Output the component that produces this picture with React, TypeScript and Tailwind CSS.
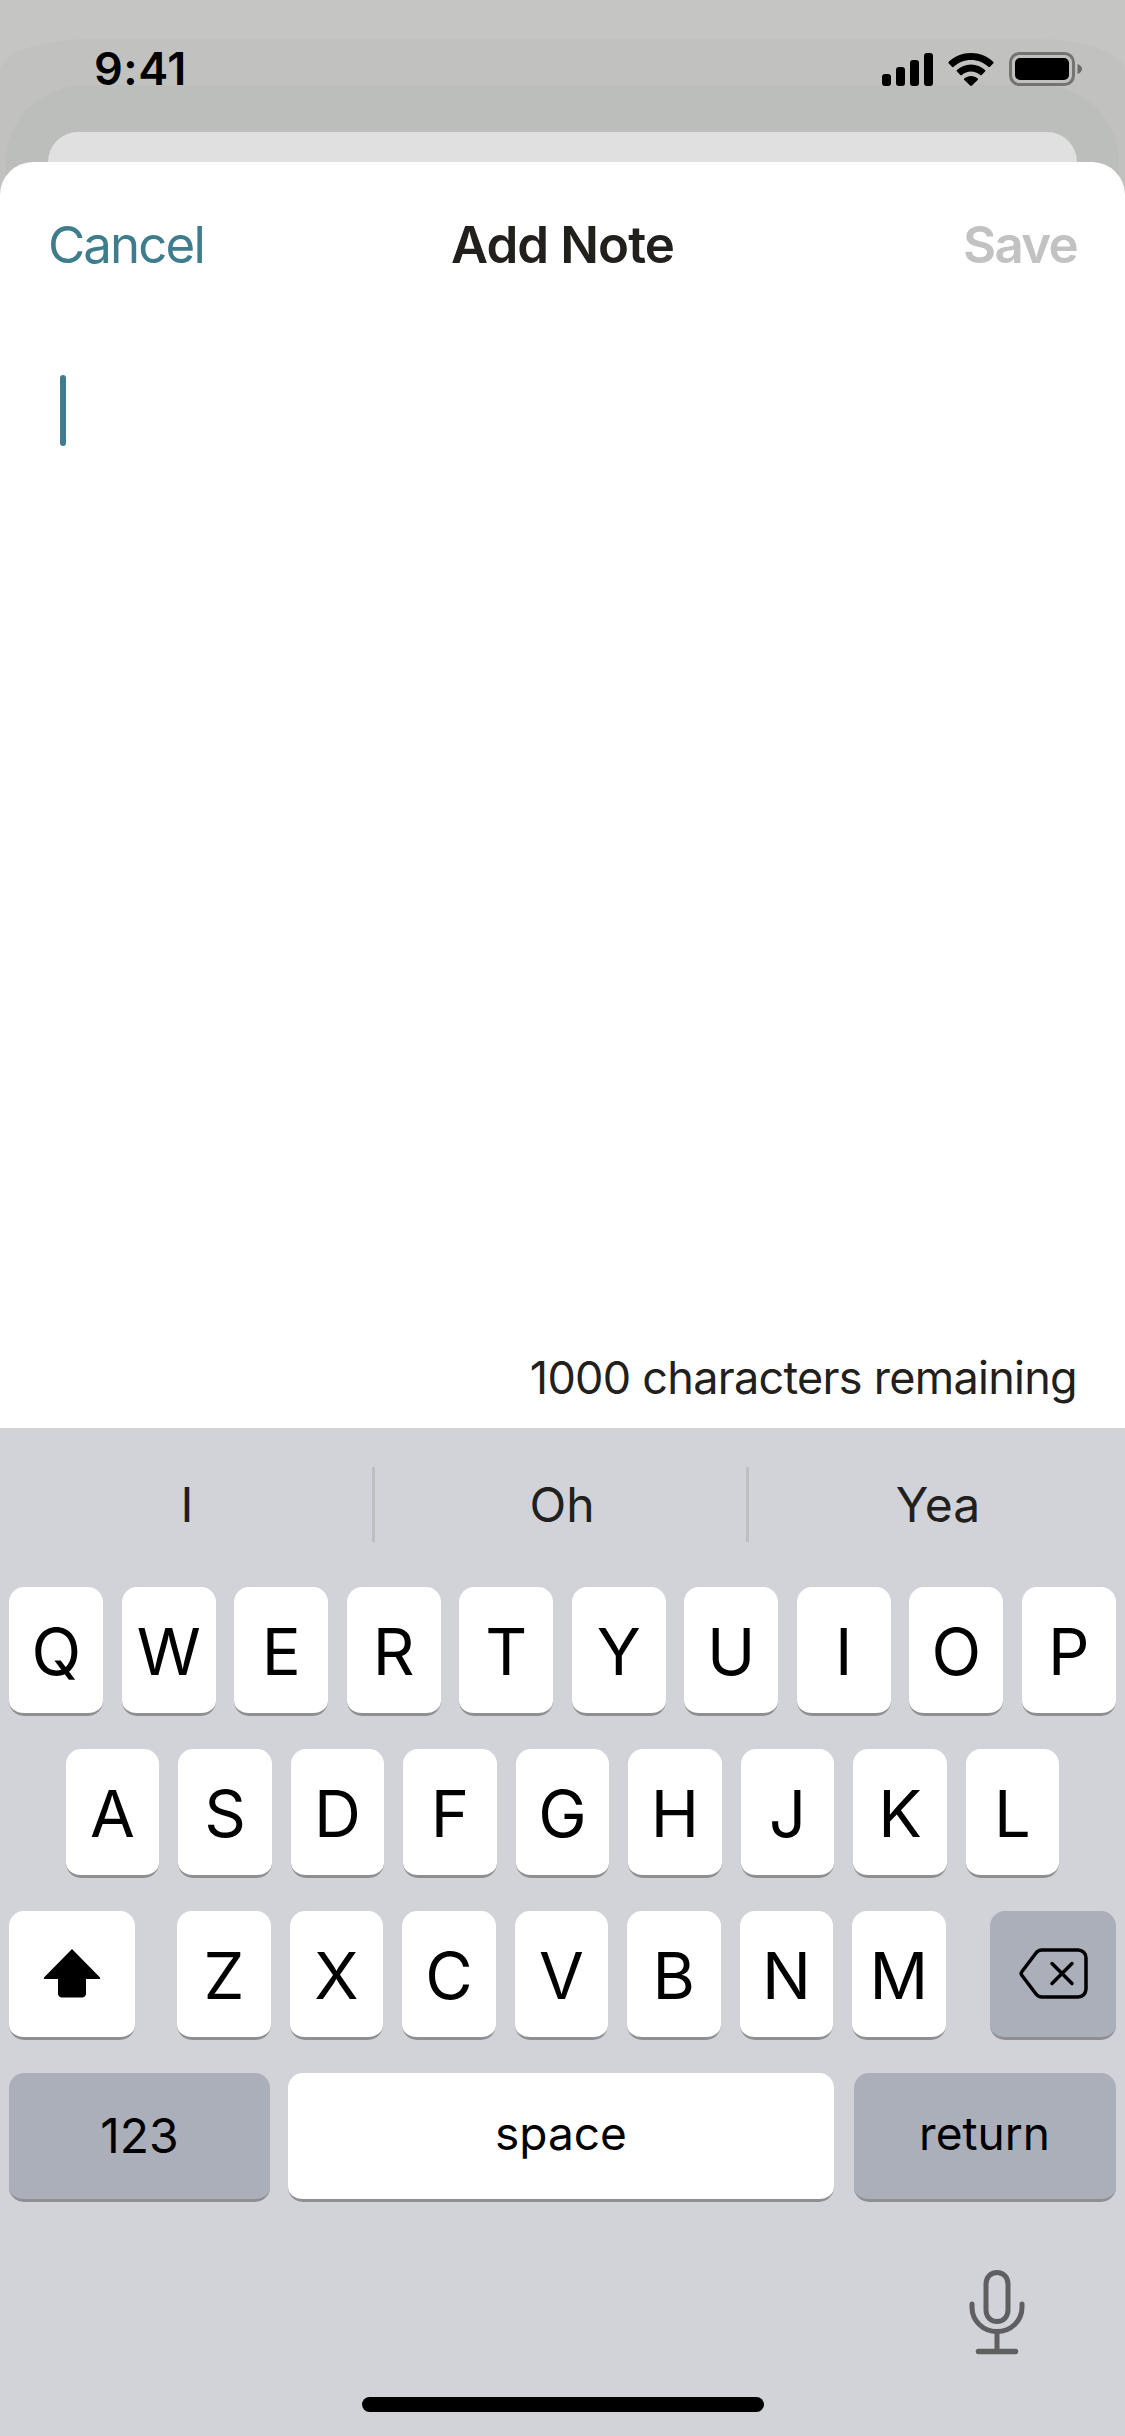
const FONT = "font-['Inter','Noto_Sans',sans-serif]";

function Key({ label }: { label: string }) {
  return (
    <div className="w-[93.75px] h-[129px] shrink-0 flex items-center justify-center bg-white rounded-[15px] border-b-[3px] border-[#8e8e93] text-[65px] leading-none text-black pt-[3px]">
      {label}
    </div>
  );
}

function Row({ keys }: { keys: string[] }) {
  return (
    <div className="flex justify-center gap-[18.75px]">
      {keys.map((k) => (
        <Key key={k} label={k} />
      ))}
    </div>
  );
}

function Signal() {
  return (
    <svg width="51" height="33" viewBox="0 0 51 33" fill="#000">
      <rect x="0" y="21" width="9" height="12" rx="3" />
      <rect x="14" y="14" width="9" height="19" rx="3" />
      <rect x="28" y="7" width="9" height="26" rx="3" />
      <rect x="42" y="0" width="9" height="33" rx="3" />
    </svg>
  );
}

function Wifi() {
  return (
    <svg width="46" height="33" viewBox="0 0 46 33" fill="#000">
      <path d="M23 0C14.5 0 6.7 3.3 0.8 8.800c-.5.5-.5 1.200 0 1.700l3.200 3.300c.5.5 1.200.5 1.700 0C10.200 9.600 16.300 7 23 7s12.800 2.600 17.300 6.800c.5.5 1.200.5 1.700 0l3.200-3.300c.5-.5.5-1.200 0-1.700C39.300 3.300 31.500 0 23 0Z" />
      <path d="M23 11.500c-5.400 0-10.300 2.100-14 5.500-.5.4-.5 1.100 0 1.600l3.300 3.300c.4.4 1.100.5 1.600.1 2.400-2.100 5.600-3.400 9.100-3.400s6.700 1.300 9.100 3.400c.5.4 1.200.3 1.600-.1l3.300-3.300c.5-.5.5-1.200 0-1.600-3.700-3.400-8.600-5.500-14-5.500Z" />
      <path d="M23 23c-2.600 0-5 1-6.700 2.600-.4.4-.4 1.100 0 1.500l5.800 5.500c.5.5 1.300.5 1.800 0l5.800-5.500c.4-.4.4-1.100 0-1.500C28 24 25.600 23 23 23Z" />
    </svg>
  );
}

function Battery() {
  return (
    <svg width="73" height="34" viewBox="0 0 73 34">
      <rect x="1.500" y="1.500" width="63" height="31" rx="9" fill="none" stroke="#000" strokeOpacity="0.4" strokeWidth="3" />
      <rect x="6" y="6" width="54" height="22" rx="5" fill="#000" />
      <path d="M68.500 12v10c2.500-.8 4.500-2.700 4.500-5s-2-4.200-4.500-5Z" fill="#000" fillOpacity="0.45" />
    </svg>
  );
}

function Shift() {
  return (
    <svg width="58" height="50" viewBox="0 0 58 50" fill="#000">
      <path d="M29 1 57 29.500c.6.700.2 1.500-.8 1.500H43v14.500C43 48 41 49.500 39 49.500H19c-2 0-4-1.500-4-4V31H1.800c-1 0-1.400-.8-.8-1.500L29 1Z" />
    </svg>
  );
}

function Backspace() {
  return (
    <svg width="69" height="51" viewBox="0 0 69 51" fill="none" stroke="#000" strokeWidth="3.500" strokeLinecap="round" strokeLinejoin="round">
      <path d="M23 2h36c4.500 0 8 3.500 8 8v31c0 4.500-3.500 8-8 8H23c-2.500 0-4.500-1-6-3L3 27.500c-1-1.200-1-2.800 0-4L17 5c1.500-2 3.500-3 6-3Z" />
      <path d="M33 15.500l20 20M53 15.500l-20 20" />
    </svg>
  );
}

function Mic() {
  return (
    <svg width="56" height="85" viewBox="0 0 56 85" fill="none" stroke="#5f5f62" strokeWidth="5" strokeLinecap="round">
      <path d="M17 14c0-6.500 4.500-11.500 11-11.500s11 5 11 11.500v26c0 6.500-4.500 11.500-11 11.500s-11-5-11-11.500V14Z" />
      <path d="M3 34v3c0 14 11 24.500 25 24.500s25-10.500 25-24.500v-3" />
      <path d="M28 62v19" />
      <path d="M9.500 81.500h37" strokeWidth="5.500" />
    </svg>
  );
}

export default function App() {
  return (
    <div className={`relative w-[1125px] h-[2436px] overflow-hidden bg-[#c5c5c3] ${FONT}`}>
      {/* stacked background sheets */}
      <div className="pt-[39px] h-full">
        <div className="h-full rounded-t-[90px_32px] bg-[#c1c2bf] pt-[46px]">
          <div className="h-full mx-[6px] rounded-t-[80px_76px] bg-[#bcbebb] pt-[47px] px-[42px]">
            <div className="h-full rounded-t-[30px] bg-[#e0e0e0]" />
          </div>
        </div>
      </div>

      {/* status bar */}
      <div className="absolute top-[41px] left-0 w-full h-[54px] flex items-center justify-between pl-[94px] pr-[43px]">
        <span className="text-[45px] leading-none font-semibold text-black tracking-[0.5px]">9:41</span>
        <div className="flex items-center gap-[15px] mt-[2px]">
          <Signal />
          <Wifi />
          <Battery />
        </div>
      </div>

      {/* modal sheet with keyboard */}
      <div className="absolute top-[162px] left-0 w-full h-[2274px] flex flex-col bg-white rounded-t-[33px] overflow-hidden">
        <div className="grid grid-cols-3 items-center h-[165px] px-[48px] text-[51px] leading-none shrink-0">
          <span className="text-[#3f7d8c] tracking-[-1.9px]">Cancel</span>
          <span className="font-semibold text-[#22201d] tracking-[-0.9px] text-center whitespace-nowrap">Add Note</span>
          <span className="font-semibold text-[#c2c2c2] tracking-[-1.7px] text-right">Save</span>
        </div>
        <div className="flex-1 flex flex-col justify-between px-[48px] min-h-0">
          <div className="pl-[12px] pt-[48px]">
            <div className="w-[6px] h-[71px] rounded-full bg-[#3f7d8c]" />
          </div>
          <div className="text-right text-[45px] leading-none text-[#22201d] tracking-[-0.72px] pb-[28px]">1000 characters remaining</div>
        </div>

        {/* keyboard */}
        <div className="h-[1008px] shrink-0 bg-[#d1d3d9] flex flex-col">
          <div className="h-[153px] mb-[6px] flex items-center shrink-0 text-[48px] leading-none text-[#22201d]">
            <div className="w-[372px] pl-[2px] text-center">I</div>
            <div className="w-[3px] h-[75px] bg-[#bdbfc0]" />
            <div className="w-[371px] pl-[3px] text-center">Oh</div>
            <div className="w-[3px] h-[75px] bg-[#bdbfc0]" />
            <div className="flex-1 pl-[2px] text-center">Yea</div>
          </div>
          <div className="flex flex-col gap-[33px]">
            <Row keys={["Q", "W", "E", "R", "T", "Y", "U", "I", "O", "P"]} />
            <Row keys={["A", "S", "D", "F", "G", "H", "J", "K", "L"]} />
            <div className="flex px-[9px]">
              <div className="w-[126px] h-[129px] mr-[42px] flex items-center justify-center bg-white rounded-[15px] border-b-[3px] border-[#8e8e93] pb-[3px]">
                <Shift />
              </div>
              <div className="flex gap-[18.75px]">
                {["Z", "X", "C", "V", "B", "N", "M"].map((k) => (
                  <Key key={k} label={k} />
                ))}
              </div>
              <div className="w-[126px] h-[129px] ml-auto flex items-center justify-center bg-[#abafb9] rounded-[15px] border-b-[3px] border-[#8e8e93] pb-[1px]">
                <Backspace />
              </div>
            </div>
            <div className="flex pl-[9px] pr-[9.5px] text-[46px] leading-none text-black">
              <div className="w-[261px] h-[129px] mr-[18px] flex items-center justify-center bg-[#abafb9] rounded-[15px] border-b-[3px] border-[#8e8e93] text-[48px]">123</div>
              <div className="flex-1 h-[129px] flex items-center justify-center bg-white rounded-[15px] border-b-[3px] border-[#8e8e93] pb-[6px]">space</div>
              <div className="w-[262px] h-[129px] ml-[19.5px] flex items-center justify-center bg-[#abafb9] rounded-[15px] border-b-[3px] border-[#8e8e93] pb-[6px]">return</div>
            </div>
          </div>
          <div className="flex justify-end pr-[100px] pt-[68px]">
            <Mic />
          </div>
          <div className="flex justify-center pt-[42px]">
            <div className="w-[402px] h-[15px] rounded-full bg-black" />
          </div>
        </div>
      </div>
    </div>
  );
}
